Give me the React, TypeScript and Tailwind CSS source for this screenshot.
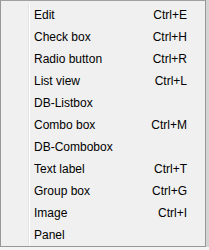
const items: { label: string; shortcut?: string }[] = [
  { label: 'Edit', shortcut: 'Ctrl+E' },
  { label: 'Check box', shortcut: 'Ctrl+H' },
  { label: 'Radio button', shortcut: 'Ctrl+R' },
  { label: 'List view', shortcut: 'Ctrl+L' },
  { label: 'DB-Listbox' },
  { label: 'Combo box', shortcut: 'Ctrl+M' },
  { label: 'DB-Combobox' },
  { label: 'Text label', shortcut: 'Ctrl+T' },
  { label: 'Group box', shortcut: 'Ctrl+G' },
  { label: 'Image', shortcut: 'Ctrl+I' },
  { label: 'Panel' },
];

export default function App() {
  return (
    <div className="w-[209px] h-[250px] bg-white flex flex-col font-['Liberation_Sans',Arial,sans-serif] text-[12px] text-[#000]">
      <div className="flex h-[247px]">
        <div className="w-[206px] flex border-l border-b border-r border-[#979797] border-t border-t-[#a0a0a0] border-dotted-0 bg-[#f0f0f0] pt-[3px]">
          <div className="w-[28px] shrink-0 border-r border-[#e2e3e3]" />
          <div className="w-px shrink-0 bg-white" />
          <ul className="flex-1">
            {items.map((item) => (
              <li key={item.label} className="h-[22px] flex items-center justify-between pl-[4px] pr-[18px]">
                <span>{item.label}</span>
                {item.shortcut && <span>{item.shortcut}</span>}
              </li>
            ))}
          </ul>
        </div>
        <div className="w-[3px] bg-[#d4d4d4]" />
      </div>
      <div className="h-[3px] bg-[#f4f4f4]" />
    </div>
  );
}
